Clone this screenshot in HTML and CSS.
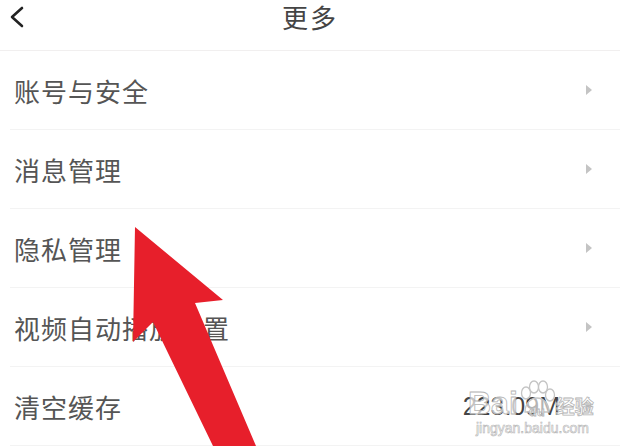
FILE: index.html
```html
<!DOCTYPE html>
<html lang="zh-CN">
<head>
    <meta charset="utf-8">
    <title>更多</title>
    <link rel="stylesheet" href="styles.css">
</head>
<body>
    <div class="page">
        <header class="topbar">
            <span class="back">
                <svg width="16" height="22" viewBox="0 0 16 22">
                    <polyline points="13,2 3,11 13,20" fill="none" stroke="#222" stroke-width="2.6" stroke-linecap="round" stroke-linejoin="round"/>
                </svg>
            </span>
            <h1 class="title">更多</h1>
            <span></span>
        </header>

        <ul class="menu">
            <li class="item">
                <span class="label">账号与安全</span>
                <span class="go"></span>
            </li>
            <li class="item">
                <span class="label">消息管理</span>
                <span class="go"></span>
            </li>
            <li class="item">
                <span class="label">隐私管理</span>
                <span class="go"></span>
            </li>
            <li class="item">
                <span class="label">视频自动播放设置</span>
                <span class="go"></span>
            </li>
            <li class="item">
                <span class="label">清空缓存</span>
                <span class="value">223.09M</span>
                <span class="go"></span>
            </li>
        </ul>

        <!-- watermark -->
        <div class="mark">
            <div class="mark-top">
                <span class="mark-bai">Bai</span>
                <span class="mark-paw">
                    <svg width="38" height="34" viewBox="0 0 38 34">
                        <g fill="rgba(255,255,255,0.6)" stroke="#c4c4c4" stroke-width="1.3">
                            <ellipse cx="8" cy="13" rx="4.5" ry="6"/>
                            <ellipse cx="16" cy="7" rx="4.5" ry="6"/>
                            <ellipse cx="25" cy="7" rx="4.5" ry="6"/>
                            <ellipse cx="32" cy="15" rx="4.5" ry="6"/>
                            <path d="M7 32 C7 23 13 18 19 18 C26 18 31 24 31 32 Z"/>
                        </g>
                    </svg>
                    <span class="mark-du">du</span>
                </span>
                <span class="mark-jy">经验</span>
            </div>
            <div class="mark-url">jingyan.baidu.com</div>
        </div>

        <svg class="pointer" width="620" height="446" viewBox="0 0 620 446">
            <polygon points="135,227 223,300 195,303 256,446 213,446 153,322 133,342" fill="#e71f2b"/>
        </svg>
    </div>
</body>
</html>
```

FILE: styles.css
```css
*{
    margin: 0;
    padding: 0;
    box-sizing: border-box;
}
body{
    background-color: #fff;
    font-family: "Noto Sans CJK SC", "Noto Sans", sans-serif;
}

.page{
    position: relative;
    width: 620px;
    height: 446px;
    overflow: hidden;
    background-color: #fff;
}

.topbar{
    height: 51px;
    display: grid;
    grid-template-columns: 1fr auto 1fr;
    align-items: start;
    padding-top: 1px;
    border-bottom: 1px solid #f1efef;
}
.back{
    display: flex;
    padding-left: 9px;
    padding-top: 5px;
}
.title{
    font-size: 26px;
    font-weight: 400;
    line-height: 32px;
    color: #444;
    letter-spacing: 2px;
}

.menu{
    list-style: none;
}
.item{
    height: 79px;
    display: flex;
    align-items: center;
    margin-left: 10px;
    padding-left: 4px;
    padding-right: 28px;
    border-bottom: 1px solid #f3f3f3;
}
.label{
    flex: 1;
    font-size: 26px;
    color: #555;
    letter-spacing: 1px;
}
.value{
    font-size: 25px;
    color: #444;
    margin-right: 26px;
    font-family: "Liberation Sans", sans-serif;
}
.go{
    width: 0;
    height: 0;
    border-top: 5px solid transparent;
    border-bottom: 5px solid transparent;
    border-left: 6px solid #c4c4c4;
}

.mark{
    position: absolute;
    left: 468px;
    top: 376px;
    white-space: nowrap;
    color: rgba(255, 255, 255, 0.7);
    -webkit-text-stroke: 0.8px #b4b4b4;
    font-family: "Liberation Sans", sans-serif;
}
.mark-top{
    display: flex;
    align-items: flex-end;
    height: 44px;
}
.mark-bai{
    font-size: 32px;
    font-weight: 700;
    line-height: 34px;
}
.mark-paw{
    position: relative;
    width: 38px;
    height: 40px;
    display: flex;
    align-items: flex-start;
}
.mark-du{
    position: absolute;
    left: 11px;
    top: 24px;
    font-size: 13px;
    font-weight: 700;
}
.mark-jy{
    font-size: 19px;
    line-height: 28px;
    font-family: "Noto Sans CJK SC", sans-serif;
    font-weight: 700;
}
.mark-url{
    font-size: 14px;
    line-height: 16px;
    padding-left: 8px;
    -webkit-text-stroke: 0.6px #b4b4b4;
}

.pointer{
    position: absolute;
    left: 0;
    top: 0;
}
```
